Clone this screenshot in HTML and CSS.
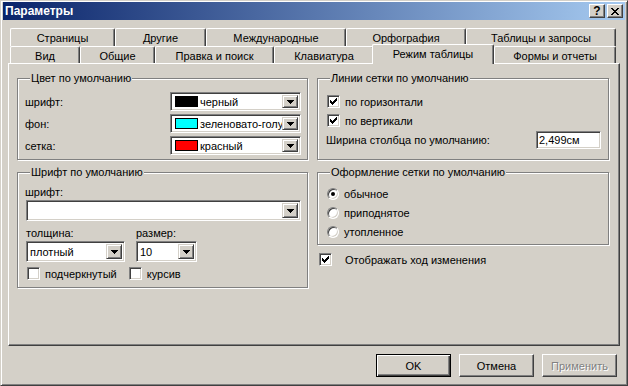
FILE: index.html
```html
<!DOCTYPE html>
<html lang="ru">
<head>
    <meta charset="UTF-8">
    <title>Параметры</title>
    <link rel="stylesheet" href="styles.css">
</head>
<body>
    <div class="window">
        <div class="titlebar">
            <span class="title">Параметры</span>
            <div class="caption-btns">
                <span class="cbtn help">?</span>
                <span class="cbtn close">
                    <svg width="8" height="7" viewBox="0 0 8 7" shape-rendering="crispEdges"><path d="M0 0h2v1h1v1h2v-1h1v-1h2v1h-1v1h-1v1h-1v1h1v1h1v1h1v1h-2v-1h-1v-1h-2v1h-1v1h-2v-1h1v-1h1v-1h1v-1h-1v-1h-1v-1h-1z"/></svg>
                </span>
            </div>
        </div>

        <div class="content">
            <div class="tabs">
                <div class="tab-row back">
                    <div class="tab w-pages">Страницы</div>
                    <div class="tab w-other">Другие</div>
                    <div class="tab w-intl">Международные</div>
                    <div class="tab w-spell">Орфография</div>
                    <div class="tab w-tables">Таблицы и запросы</div>
                </div>
                <div class="tab-row front">
                    <div class="tab w-view">Вид</div>
                    <div class="tab w-general">Общие</div>
                    <div class="tab w-edit">Правка и поиск</div>
                    <div class="tab w-keys">Клавиатура</div>
                    <div class="tab w-sheet selected">Режим таблицы</div>
                    <div class="tab w-forms">Формы и отчеты</div>
                </div>
            </div>

            <div class="panel">
                <div class="col">
                    <fieldset class="group colors">
                        <legend>Цвет по умолчанию</legend>
                        <div class="color-grid">
                            <span>шрифт:</span>
                            <div class="combo small">
                                <span class="value"><span class="swatch black"></span>черный</span>
                                <span class="drop"><svg width="7" height="4" viewBox="0 0 7 4" shape-rendering="crispEdges"><path d="M0 0h7v1h-1v1h-1v1h-1v1h-1v-1h-1v-1h-1v-1h-1z"/></svg></span>
                            </div>
                            <span>фон:</span>
                            <div class="combo small">
                                <span class="value"><span class="swatch cyan"></span>зеленовато-голу</span>
                                <span class="drop"><svg width="7" height="4" viewBox="0 0 7 4" shape-rendering="crispEdges"><path d="M0 0h7v1h-1v1h-1v1h-1v1h-1v-1h-1v-1h-1v-1h-1z"/></svg></span>
                            </div>
                            <span>сетка:</span>
                            <div class="combo small">
                                <span class="value"><span class="swatch red"></span>красный</span>
                                <span class="drop"><svg width="7" height="4" viewBox="0 0 7 4" shape-rendering="crispEdges"><path d="M0 0h7v1h-1v1h-1v1h-1v1h-1v-1h-1v-1h-1v-1h-1z"/></svg></span>
                            </div>
                        </div>
                    </fieldset>

                    <fieldset class="group font">
                        <legend>Шрифт по умолчанию</legend>
                        <div class="label">шрифт:</div>
                        <div class="combo wide">
                            <span class="value"></span>
                            <span class="drop"><svg width="7" height="4" viewBox="0 0 7 4" shape-rendering="crispEdges"><path d="M0 0h7v1h-1v1h-1v1h-1v1h-1v-1h-1v-1h-1v-1h-1z"/></svg></span>
                        </div>
                        <div class="font-row">
                            <div class="field weight">
                                <div class="label">толщина:</div>
                                <div class="combo">
                                    <span class="value">плотный</span>
                                    <span class="drop"><svg width="7" height="4" viewBox="0 0 7 4" shape-rendering="crispEdges"><path d="M0 0h7v1h-1v1h-1v1h-1v1h-1v-1h-1v-1h-1v-1h-1z"/></svg></span>
                                </div>
                            </div>
                            <div class="field size">
                                <div class="label">размер:</div>
                                <div class="combo">
                                    <span class="value">10</span>
                                    <span class="drop"><svg width="7" height="4" viewBox="0 0 7 4" shape-rendering="crispEdges"><path d="M0 0h7v1h-1v1h-1v1h-1v1h-1v-1h-1v-1h-1v-1h-1z"/></svg></span>
                                </div>
                            </div>
                        </div>
                        <div class="check-row">
                            <label class="check underline"><span class="box"></span>подчеркнутый</label>
                            <label class="check"><span class="box"></span>курсив</label>
                        </div>
                    </fieldset>
                </div>

                <div class="col">
                    <fieldset class="group lines">
                        <legend>Линии сетки по умолчанию</legend>
                        <label class="check"><span class="box checked"><svg width="7" height="7" viewBox="0 0 7 7" shape-rendering="crispEdges"><path d="M6 0h1v3h-1v1h-1v1h-1v1h-1v1h-1v-1h-1v-1h-1v-3h1v1h1v1h1v-1h1v-1h1z"/></svg></span>по горизонтали</label>
                        <label class="check"><span class="box checked"><svg width="7" height="7" viewBox="0 0 7 7" shape-rendering="crispEdges"><path d="M6 0h1v3h-1v1h-1v1h-1v1h-1v1h-1v-1h-1v-1h-1v-3h1v1h1v1h1v-1h1v-1h1z"/></svg></span>по вертикали</label>
                        <div class="width-row">
                            <span>Ширина столбца по умолчанию:</span>
                            <span class="textbox">2,499см</span>
                        </div>
                    </fieldset>

                    <fieldset class="group style">
                        <legend>Оформление сетки по умолчанию</legend>
                        <label class="radio"><span class="dot on"></span>обычное</label>
                        <label class="radio"><span class="dot"></span>приподнятое</label>
                        <label class="radio"><span class="dot"></span>утопленное</label>
                    </fieldset>

                    <label class="check progress"><span class="box checked"><svg width="7" height="7" viewBox="0 0 7 7" shape-rendering="crispEdges"><path d="M6 0h1v3h-1v1h-1v1h-1v1h-1v1h-1v-1h-1v-1h-1v-3h1v1h1v1h1v-1h1v-1h1z"/></svg></span>Отображать ход изменения</label>
                </div>
            </div>

            <div class="buttons">
                <span class="btn default">OK</span>
                <span class="btn">Отмена</span>
                <span class="btn disabled">Применить</span>
            </div>
        </div>
    </div>
</body>
</html>
```

FILE: styles.css
```css
* {
    box-sizing: border-box;
}
body {
    margin: 0;
    font-family: "Liberation Sans", Arial, sans-serif;
    font-size: 11px;
    color: #000;
    background: #d4d0c8;
}
.window {
    width: 628px;
    height: 386px;
    background: #d4d0c8;
    border: 1px solid;
    border-color: #d4d0c8 #404040 #404040 #d4d0c8;
    box-shadow: inset 1px 1px #fff, inset -1px -1px #808080;
    padding: 1px 2px 2px 2px;
    display: flex;
    flex-direction: column;
}
.titlebar {
    height: 18px;
    background: linear-gradient(to right, #0a246a, #a6caf0);
    display: flex;
    align-items: center;
    justify-content: space-between;
    padding: 0 2px 0 2px;
}
.title {
    color: #fff;
    font-weight: bold;
    font-size: 12px;
}
.caption-btns {
    display: flex;
    gap: 2px;
}
.cbtn {
    width: 16px;
    height: 14px;
    background: #d4d0c8;
    border: 1px solid;
    border-color: #fff #404040 #404040 #fff;
    box-shadow: inset -1px -1px #808080;
    display: flex;
    align-items: center;
    justify-content: center;
    font-weight: bold;
    font-size: 12px;
    line-height: 12px;
}
.content {
    flex: 1;
    padding: 8px 5px 0 5px;
    display: flex;
    flex-direction: column;
}

/* tabs */
.tabs {
    padding-left: 2px;
}
.tab-row {
    display: flex;
}
.tab {
    background: #d4d0c8;
    border-top: 1px solid #fff;
    border-left: 1px solid #fff;
    border-right: 1px solid #404040;
    border-radius: 2px 2px 0 0;
    box-shadow: inset -1px 0 #808080;
    text-align: center;
    white-space: nowrap;
}
.back .tab {
    height: 18px;
    line-height: 18px;
}
.front .tab {
    height: 17px;
    line-height: 17px;
    padding-top: 1px;
}
.tab.selected {
    position: relative;
    z-index: 1;
    height: 20px;
    margin: -2px 0 -1px -2px;
    line-height: 16px;
    padding-top: 1px;
}
.w-pages { width: 105px; }
.w-other { width: 91px; }
.w-intl { width: 140px; }
.w-spell { width: 120px; }
.w-tables { width: 150px; }
.w-view { width: 70px; }
.w-general { width: 75px; }
.w-edit { width: 119px; }
.w-keys { width: 100px; }
.w-sheet { width: 122px; }
.w-forms { width: 122px; }

/* page */
.panel {
    height: 283px;
    border: 1px solid;
    border-color: #fff #404040 #404040 #fff;
    box-shadow: inset -1px -1px #808080;
    padding: 8px 10px 0 8px;
    display: flex;
    gap: 9px;
}
.col {
    display: flex;
    flex-direction: column;
}
.col:first-child {
    width: 291px;
}
.col:last-child {
    width: 292px;
}
.group {
    margin: 0;
    min-width: 0;
    border: 1px solid #808080;
    box-shadow: inset 1px 1px #fff, 1px 1px #fff;
    padding: 7px 6px 4px 7px;
}
.group legend {
    margin-left: 5px;
    padding: 0 1px;
    line-height: 13px;
    background: #d4d0c8;
}
.colors,
.lines {
    height: 88px;
}

/* combo boxes */
.combo {
    height: 21px;
    background: #fff;
    border: 1px solid;
    border-color: #808080 #fff #fff #808080;
    box-shadow: inset 1px 1px #404040, inset -1px -1px #d4d0c8;
    padding: 2px;
    display: flex;
    align-items: stretch;
}
.combo.small {
    height: 19px;
}
.combo .value {
    flex: 1;
    display: flex;
    align-items: center;
    padding-left: 1px;
    white-space: nowrap;
    overflow: hidden;
}
.drop {
    width: 16px;
    flex: none;
    background: #d4d0c8;
    border: 1px solid;
    border-color: #d4d0c8 #404040 #404040 #d4d0c8;
    box-shadow: inset 1px 1px #fff, inset -1px -1px #808080;
    display: flex;
    align-items: center;
    justify-content: center;
}
.swatch {
    width: 23px;
    height: 11px;
    flex: none;
    border: 1px solid #000;
    margin: 0 2px 0 1px;
}
.swatch.black { background: #000; }
.swatch.cyan { background: #00ffff; }
.swatch.red { background: #ff0000; }

.colors .color-grid {
    display: grid;
    grid-template-columns: 1fr 131px;
    grid-auto-rows: 19px;
    row-gap: 3px;
    align-items: center;
}
.font {
    margin-top: 6px;
    padding-bottom: 7px;
}
.font .label {
    line-height: 13px;
}
.font .combo.wide {
    margin: 1px 0 6px 1px;
    width: 275px;
}
.font-row {
    display: flex;
    gap: 11px;
    padding-left: 1px;
}
.field .label {
    margin-bottom: 1px;
}
.weight .combo {
    width: 99px;
}
.size .combo {
    width: 61px;
}
.check-row {
    display: flex;
    gap: 12px;
    margin-top: 5px;
    padding-left: 2px;
}

/* checkboxes and radios */
.check,
.radio {
    display: flex;
    align-items: center;
    gap: 5px;
    height: 13px;
}
.box {
    width: 13px;
    height: 13px;
    flex: none;
    background: #fff;
    border: 1px solid;
    border-color: #808080 #fff #fff #808080;
    box-shadow: inset 1px 1px #404040, inset -1px -1px #d4d0c8;
    display: flex;
    align-items: center;
    justify-content: center;
}
.lines .check {
    margin-left: 2px;
    margin-top: 3px;
}
.lines .check + .check {
    margin-top: 6px;
}
.width-row {
    display: flex;
    align-items: center;
    justify-content: space-between;
    margin: 4px 0 0 1px;
    padding-right: 1px;
}
.textbox {
    width: 65px;
    height: 18px;
    background: #fff;
    border: 1px solid;
    border-color: #808080 #fff #fff #808080;
    box-shadow: inset 1px 1px #404040, inset -1px -1px #d4d0c8;
    padding: 0 2px;
    line-height: 16px;
}
.style {
    margin-top: 6px;
    padding-bottom: 6px;
}
.radio {
    margin-left: 2px;
    margin-top: 6px;
}
.radio:first-of-type {
    margin-top: 1px;
}
.dot {
    width: 12px;
    height: 12px;
    flex: none;
    border-radius: 50%;
    background: #fff;
    border: 1px solid;
    border-color: #808080 #fff #fff #808080;
    box-shadow: inset 1px 1px #404040, inset -1px -1px #d4d0c8;
    display: flex;
    align-items: center;
    justify-content: center;
}
.dot.on::after {
    content: "";
    width: 4px;
    height: 4px;
    border-radius: 50%;
    background: #000;
}
.progress {
    margin: 8px 0 0 2px;
    gap: 13px;
}

/* dialog buttons */
.buttons {
    display: flex;
    justify-content: flex-end;
    gap: 8px;
    margin-top: 8px;
    padding-right: 3px;
}
.btn {
    width: 75px;
    height: 23px;
    border: 1px solid;
    border-color: #fff #404040 #404040 #fff;
    box-shadow: inset -1px -1px #808080;
    display: flex;
    align-items: center;
    justify-content: center;
}
.btn.default {
    border-color: #000;
    box-shadow: inset 1px 1px #fff, inset -1px -1px #404040, inset -2px -2px #808080;
}
.btn.disabled {
    color: #808080;
    text-shadow: 1px 1px #fff;
}
```
